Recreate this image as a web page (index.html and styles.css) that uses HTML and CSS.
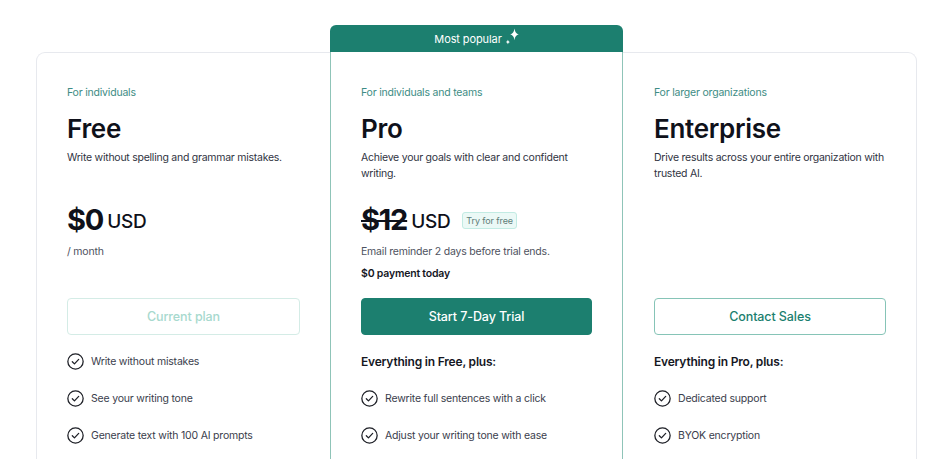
FILE: index.html
```html
<!DOCTYPE html>
<html lang="en">
<head>
<meta charset="utf-8">
<title>Plans</title>
<link rel="stylesheet" href="styles.css">
</head>
<body>
<div class="plans">
  <section class="plan plan-side plan-left">
    <p class="audience">For individuals</p>
    <h2 class="name">Free</h2>
    <p class="desc">Write without spelling and grammar mistakes.</p>
    <div class="price-block">
      <div class="price"><span class="amount">$0</span><span class="cur">USD</span></div>
      <p class="sub">/ month</p>
    </div>
    <button class="btn btn-muted">Current plan</button>
    <ul class="features">
      <li><svg class="check" viewBox="0 0 16 16"><circle cx="8" cy="8" r="7.2"/><path d="M5 8.2l2 2 4-4.2"/></svg>Write without mistakes</li>
      <li><svg class="check" viewBox="0 0 16 16"><circle cx="8" cy="8" r="7.2"/><path d="M5 8.2l2 2 4-4.2"/></svg>See your writing tone</li>
      <li><svg class="check" viewBox="0 0 16 16"><circle cx="8" cy="8" r="7.2"/><path d="M5 8.2l2 2 4-4.2"/></svg>Generate text with 100 AI prompts</li>
    </ul>
  </section>

  <div class="featured">
    <div class="ribbon">Most popular
      <svg class="sparkle" viewBox="0 0 14 17"><path d="M9.8 0.5Q10.4 5.2 13.8 6Q10.4 6.8 9.8 11.5Q9.2 6.8 5.8 6Q9.2 5.2 9.8 0.5z"/><path d="M3.6 11.2Q3.9 12.9 5.5 13.3Q3.9 13.7 3.6 15.4Q3.3 13.7 1.7 13.3Q3.3 12.9 3.6 11.2z"/></svg>
    </div>
    <section class="plan plan-mid">
      <p class="audience">For individuals and teams</p>
      <h2 class="name">Pro</h2>
      <p class="desc">Achieve your goals with clear and confident writing.</p>
      <div class="price-block">
        <div class="price"><span class="amount strike">$12</span><span class="cur">USD</span><span class="badge">Try for free</span></div>
        <p class="sub">Email reminder 2 days before trial ends.</p>
        <p class="sub strong">$0 payment today</p>
      </div>
      <button class="btn btn-primary">Start 7-Day Trial</button>
      <ul class="features">
        <li class="head">Everything in Free, plus:</li>
        <li><svg class="check" viewBox="0 0 16 16"><circle cx="8" cy="8" r="7.2"/><path d="M5 8.2l2 2 4-4.2"/></svg>Rewrite full sentences with a click</li>
        <li><svg class="check" viewBox="0 0 16 16"><circle cx="8" cy="8" r="7.2"/><path d="M5 8.2l2 2 4-4.2"/></svg>Adjust your writing tone with ease</li>
      </ul>
    </section>
  </div>

  <section class="plan plan-side plan-right">
    <p class="audience">For larger organizations</p>
    <h2 class="name">Enterprise</h2>
    <p class="desc">Drive results across your entire organization with trusted AI.</p>
    <div class="price-block"></div>
    <button class="btn btn-outline">Contact Sales</button>
    <ul class="features">
      <li class="head">Everything in Pro, plus:</li>
      <li><svg class="check" viewBox="0 0 16 16"><circle cx="8" cy="8" r="7.2"/><path d="M5 8.2l2 2 4-4.2"/></svg>Dedicated support</li>
      <li><svg class="check" viewBox="0 0 16 16"><circle cx="8" cy="8" r="7.2"/><path d="M5 8.2l2 2 4-4.2"/></svg>BYOK encryption</li>
    </ul>
  </section>
</div>
</body>
</html>
```

FILE: styles.css
```css
* { box-sizing: border-box; }
html, body { margin: 0; background: #fff; }
body {
  font-family: Inter, "Noto Sans", sans-serif;
  color: #2e3140;
  height: 459px;
  overflow: hidden;
  padding: 25px 30px 0 36px;
}
p, h2, ul { margin: 0; padding: 0; }

.plans {
  display: grid;
  grid-template-columns: 294px 293px 294px;
  align-items: start;
}

.plan {
  padding: 33px 30px 40px 30px;
  background: #fff;
}
.plan-side {
  margin-top: 27px;
  border-top: 1px solid #e7e9ee;
  height: 460px;
}
.plan-left { border-left: 1px solid #e7e9ee; border-top-left-radius: 9px; }
.plan-right {
  border-right: 1px solid #e7e9ee;
  border-top-right-radius: 9px;
  padding-left: 31px;
}

.featured { display: flex; flex-direction: column; }
.ribbon {
  height: 27px;
  background: #1c7f6f;
  color: #fff;
  border-radius: 6px 6px 0 0;
  font-size: 11px;
  font-weight: 400;
  letter-spacing: -0.1px;
  display: flex;
  align-items: center;
  justify-content: center;
  gap: 2px;
  padding-top: 1px;
}
.sparkle { width: 15px; height: 18px; fill: #fff; margin-top: -4px; flex: none; }
.plan-mid {
  border-left: 1px solid #8fc4b8;
  border-right: 1px solid #8fc4b8;
  height: 460px;
  padding-top: 34px;
}

.audience {
  font-size: 10.5px;
  line-height: 14px;
  color: #3d8c84;
  letter-spacing: -0.2px;
}
.name {
  margin-top: 13px;
  font-size: 26px;
  line-height: 32px;
  font-weight: 600;
  color: #0f111a;
  letter-spacing: -0.3px;
}
.desc {
  margin-top: 5px;
  font-size: 10.5px;
  line-height: 16px;
  height: 32px;
  color: #30333f;
  letter-spacing: -0.25px;
}
.price-block {
  margin-top: 19px;
  height: 97px;
}
.price {
  display: flex;
  align-items: center;
  height: 36px;
}
.amount {
  font-size: 29px;
  font-weight: 700;
  color: #0f111a;
  letter-spacing: -1.2px;
}
.strike { text-decoration: line-through; text-decoration-thickness: 2px; }
.cur {
  font-size: 19px;
  font-weight: 500;
  color: #0f111a;
  margin-left: 4px;
  margin-top: 4px;
  letter-spacing: -0.3px;
}
.badge {
  margin-left: 12px;
  margin-top: 2px;
  font-size: 9px;
  line-height: 13px;
  padding: 1px 3px;
  color: #5f7e79;
  background: #ebf9f6;
  border: 1px solid #c2ebe3;
  border-radius: 3px;
  letter-spacing: -0.1px;
}
.sub {
  margin-top: 7px;
  font-size: 10.5px;
  line-height: 16px;
  color: #4e5260;
  letter-spacing: -0.2px;
}
.sub.strong {
  margin-top: 6px;
  font-weight: 600;
  color: #15171f;
}

.btn {
  display: block;
  width: 100%;
  height: 37px;
  border-radius: 4px;
  font-family: inherit;
  font-size: 12.5px;
  font-weight: 500;
  background: #fff;
  cursor: pointer;
  letter-spacing: -0.1px;
}
.btn-muted { border: 1px solid #d4ece6; color: #a7d9ce; }
.btn-primary { border: 1px solid #1c7f6f; background: #1c7f6f; color: #fff; }
.btn-outline { border: 1px solid #86c4b7; color: #1c7f6f; }

.features {
  list-style: none;
  margin-top: 8px;
}
.features li {
  display: flex;
  align-items: center;
  height: 37px;
  font-size: 10.5px;
  color: #3a3d4c;
  letter-spacing: -0.2px;
}
.features li.head {
  font-size: 12px;
  font-weight: 600;
  color: #15171f;
}
.check {
  width: 17px;
  height: 17px;
  margin-right: 7px;
  fill: none;
  stroke: #1d1f26;
  stroke-width: 1.2;
  stroke-linecap: round;
  stroke-linejoin: round;
  flex: none;
}
```
